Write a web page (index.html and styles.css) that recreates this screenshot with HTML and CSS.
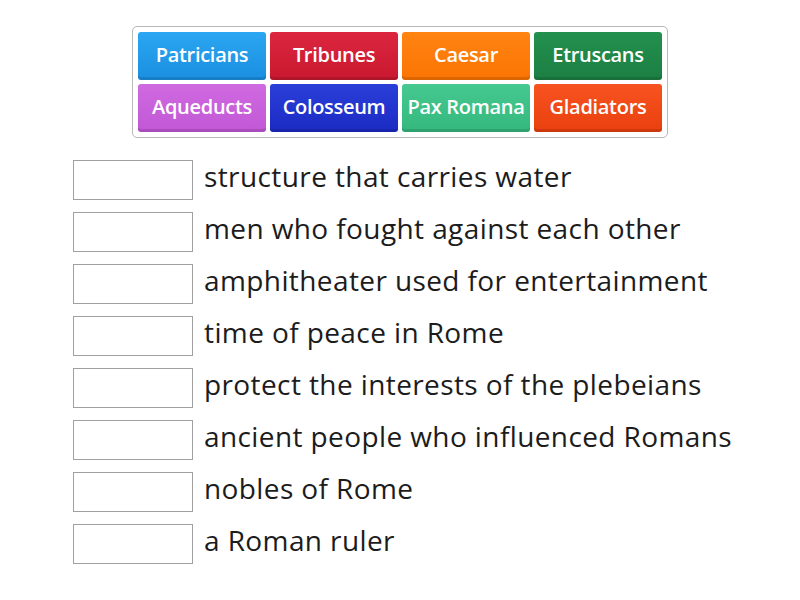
FILE: index.html
```html
<!DOCTYPE html>
<html>
<head>
<meta charset="utf-8">
<link rel="stylesheet" href="styles.css">
</head>
<body>
<div class="page">
  <div class="bank">
    <div class="tile c-blue">Patricians</div>
    <div class="tile c-red">Tribunes</div>
    <div class="tile c-orange">Caesar</div>
    <div class="tile c-green">Etruscans</div>
    <div class="tile c-purple">Aqueducts</div>
    <div class="tile c-navy">Colosseum</div>
    <div class="tile c-teal">Pax Romana</div>
    <div class="tile c-vermil">Gladiators</div>
  </div>
  <div class="list">
    <div class="row"><div class="slot"></div><div class="clue">structure that carries water</div></div>
    <div class="row"><div class="slot"></div><div class="clue">men who fought against each other</div></div>
    <div class="row"><div class="slot"></div><div class="clue">amphitheater used for entertainment</div></div>
    <div class="row"><div class="slot"></div><div class="clue">time of peace in Rome</div></div>
    <div class="row"><div class="slot"></div><div class="clue">protect the interests of the plebeians</div></div>
    <div class="row"><div class="slot"></div><div class="clue">ancient people who influenced Romans</div></div>
    <div class="row"><div class="slot"></div><div class="clue">nobles of Rome</div></div>
    <div class="row"><div class="slot"></div><div class="clue">a Roman ruler</div></div>
  </div>
</div>
</body>
</html>
```

FILE: styles.css
```css
html, body {
  margin: 0;
  padding: 0;
  background: #ffffff;
}
.page {
  width: 800px;
  height: 600px;
  font-family: "Open Sans", Lato, sans-serif;
  display: flex;
  flex-direction: column;
  align-items: center;
  padding-top: 26px;
  box-sizing: border-box;
}
.bank {
  display: grid;
  grid-template-columns: repeat(4, 128px);
  grid-auto-rows: 48px;
  gap: 4px;
  padding: 5px;
  border: 1px solid #b8b8b8;
  border-radius: 5px;
}
.tile {
  display: flex;
  align-items: center;
  justify-content: center;
  color: #ffffff;
  font-size: 20px;
  font-weight: 600;
  border-radius: 3px;
  white-space: nowrap;
  letter-spacing: -0.3px;
  padding-bottom: 3px;
  box-sizing: border-box;
  box-shadow: inset 0 -3px 0 rgba(0,0,0,0.12);
}
.c-blue { background: linear-gradient(#2aa6f2, #1b8fe0); }
.c-red { background: linear-gradient(#dc2640, #c8182e); }
.c-orange { background: linear-gradient(#ff8412, #fb7403); }
.c-green { background: linear-gradient(#23904f, #1c7f43); }
.c-purple { background: linear-gradient(#d06ae0, #c157d6); }
.c-navy { background: linear-gradient(#2a3fd8, #1b2bc4); }
.c-teal { background: linear-gradient(#45c990, #35b87e); }
.c-vermil { background: linear-gradient(#f75320, #e9400e); }
.list {
  align-self: flex-start;
  margin-left: 73px;
  margin-top: 22px;
  display: flex;
  flex-direction: column;
  gap: 12px;
}
.row {
  display: flex;
  align-items: center;
  gap: 11px;
  height: 40px;
}
.slot {
  width: 118px;
  height: 38px;
  border: 1px solid #a0a0a0;
  background: #ffffff;
  flex: none;
}
.clue {
  font-size: 28px;
  color: #1c1c1c;
  white-space: nowrap;
  padding-bottom: 8px;
  letter-spacing: 0.4px;
}
```
